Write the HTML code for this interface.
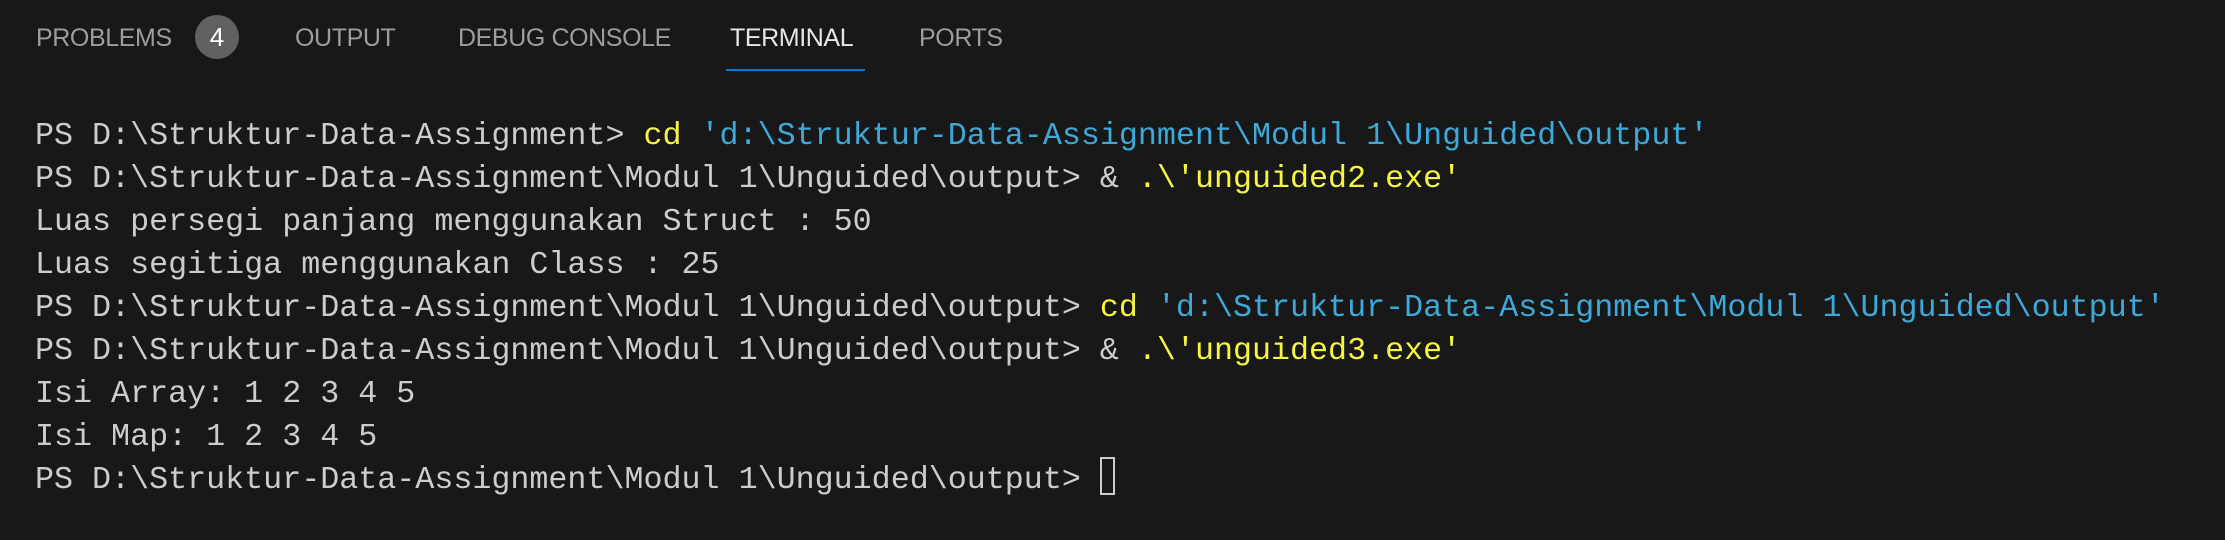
<!DOCTYPE html>
<html><head><style>
body{margin:0;width:2225px;height:540px;background:#181818;overflow:hidden;position:relative}
.tab{position:absolute;top:22px;font-family:"Liberation Sans",sans-serif;font-size:25px;color:#9d9d9d;line-height:32px;letter-spacing:-0.4px}
.badge{position:absolute;left:195px;top:15px;width:44px;height:44px;border-radius:50%;background:#616161;color:#fff;font-family:"Liberation Sans",sans-serif;font-size:26px;line-height:44px;text-align:center}
.ul{position:absolute;left:726px;top:69px;width:139px;height:2px;background:#0078d4}
pre{position:absolute;left:35px;top:115px;margin:0;font-family:"Liberation Mono",monospace;font-size:31.7px;line-height:43px;color:#cccccc}
.y{color:#f5f543}.c{color:#3ea8d8}
.cur{position:absolute;left:1100px;top:457px;width:15px;height:38px;border:2px solid #cccccc;box-sizing:border-box}
</style></head><body>
<div class="tab" style="left:36px">PROBLEMS</div>
<div class="badge">4</div>
<div class="tab" style="left:295px">OUTPUT</div>
<div class="tab" style="left:458px">DEBUG CONSOLE</div>
<div class="tab" style="left:730px;color:#e7e7e7">TERMINAL</div>
<div class="tab" style="left:919px">PORTS</div>
<div class="ul"></div>
<pre>PS D:\Struktur-Data-Assignment&gt; <span class="y">cd</span> <span class="c">'d:\Struktur-Data-Assignment\Modul 1\Unguided\output'</span>
PS D:\Struktur-Data-Assignment\Modul 1\Unguided\output&gt; &amp; <span class="y">.\'unguided2.exe'</span>
Luas persegi panjang menggunakan Struct : 50
Luas segitiga menggunakan Class : 25
PS D:\Struktur-Data-Assignment\Modul 1\Unguided\output&gt; <span class="y">cd</span> <span class="c">'d:\Struktur-Data-Assignment\Modul 1\Unguided\output'</span>
PS D:\Struktur-Data-Assignment\Modul 1\Unguided\output&gt; &amp; <span class="y">.\'unguided3.exe'</span>
Isi Array: 1 2 3 4 5
Isi Map: 1 2 3 4 5
PS D:\Struktur-Data-Assignment\Modul 1\Unguided\output&gt; </pre>
<div class="cur"></div>
</body></html>
